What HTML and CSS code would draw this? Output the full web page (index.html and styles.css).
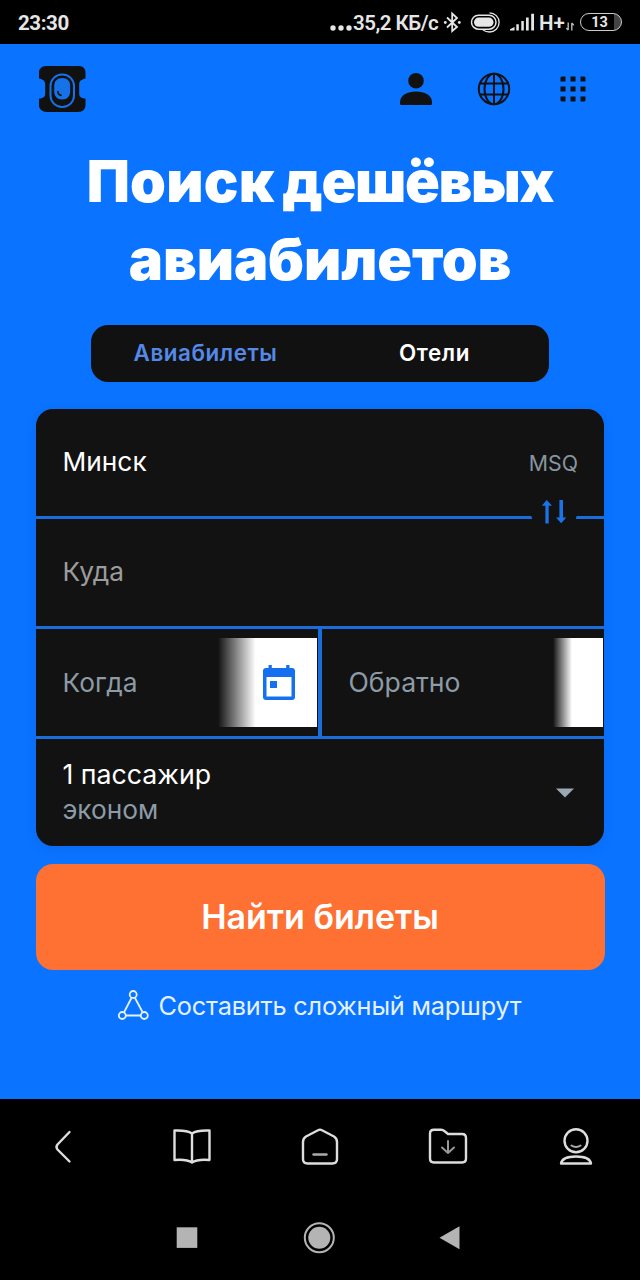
FILE: index.html
```html
<!DOCTYPE html>
<html lang="ru">
<head>
<meta charset="utf-8">
<title>Поиск дешёвых авиабилетов</title>
<link rel="stylesheet" href="styles.css">
</head>
<body>
<div class="screen">
  <div class="status">
    <span class="clock">23:30</span>
    <div class="status-right">
      <svg class="dots" width="24" height="44" viewBox="0 0 24 44" fill="#e6e6e6"><circle cx="4" cy="28" r="2.700"/><circle cx="12" cy="28" r="2.700"/><circle cx="20" cy="28" r="2.700"/></svg>
      <span class="speed">35,2 КБ/с</span>
      <svg class="status-icons" width="96" height="44" viewBox="440 0 96 44" fill="none" stroke="#e6e6e6">
        <path d="M447 17.500L457 27L452.200 31V13.500L457 18L447 27.500" stroke-width="1.800"/>
        <circle cx="445.300" cy="22.500" r="1.400" fill="#e6e6e6" stroke="none"/><circle cx="459.300" cy="22.500" r="1.400" fill="#e6e6e6" stroke="none"/>
        <rect x="471.500" y="15.200" width="24.500" height="14" rx="7" stroke-width="1.500"/>
        <rect x="474" y="17.600" width="19.500" height="9.200" rx="4.600" fill="#e6e6e6" stroke="none"/>
        <path d="M489.500 12.800A9.600 9.600 0 0 1 489.500 32C486.500 32 484.500 31 483 30" stroke-width="1.300"/>
        <path d="M510 30.500V29.300L514.500 27V30.500ZM516.300 30.500V24.300H518.800V30.500ZM521.300 30.500V21H523.800V30.500ZM526 30.500V17.500H528.700V30.500ZM531.200 30.500V13.700H534V30.500Z" fill="#e6e6e6" stroke="none"/>
      </svg>
      <span class="net">H+</span>
      <svg width="8" height="44" viewBox="0 0 8 44" fill="none" stroke="#b8b8b8" stroke-width="1.400"><path d="M2.200 22.500V30M.3 28L2.200 30M5.800 30.500V23M5.800 23L7.700 25.200"/></svg>
      <div class="battery"><span>13</span></div>
    </div>
  </div>

  <main class="page">
    <header class="header">
      <svg class="logo" width="48" height="48" viewBox="38 65 48 48">
        <path d="M46 66H79C83 66 85.500 69 85.500 72V78.500C82 79 79.200 81 79.200 84V94C79.200 97 82 98.500 85.500 98.500V105C85.500 109 83 112 78 112H47C42 112 39 109 39 105V98.500C42.500 98.500 45.200 97 45.200 94V84C45.200 81 42.500 79 39 78.500V72C39 69 42 66 46 66Z" fill="#111"/>
        <rect x="50.500" y="74.500" width="23.500" height="32.500" rx="11.500" fill="none" stroke="#1672e8" stroke-width="2"/>
        <path d="M62.200 78C67.200 78 70.200 81 70.200 86V91C70.200 96.500 67.200 99.500 62.200 99.500S54.200 96.500 54.200 91V86C54.200 81 57.200 78 62.200 78Z" fill="#1672e8"/>
        <path d="M57.800 91C57.800 94 59 95.300 61.700 95.300" fill="none" stroke="#111" stroke-width="1.700"/>
      </svg>
      <div class="actions">
        <svg width="34" height="34" viewBox="399 72 34 34" fill="#111"><circle cx="416" cy="80.700" r="7.800"/><path d="M400 102V103.500Q400 105 401.500 105H430.500Q432 105 432 103.500V102C432 95.500 424.500 91.500 416 91.500S400 95.500 400 102Z"/></svg>
        <svg width="34" height="34" viewBox="477 72 34 34" fill="none" stroke="#111" stroke-width="2"><circle cx="494" cy="89" r="15.200"/><ellipse cx="494" cy="89" rx="9.500" ry="15.200"/><path d="M494 74V104M480 83.500H508M480 94.500H508"/></svg>
        <svg width="26" height="26" viewBox="0 0 26 26" fill="#111"><path d="M1.500 .5h4v5h-5v-4zM10.500 .5h5v5h-5zM20.500 .5h4l1 1v4h-5zM.5 10.500h5v5h-5zM10.500 10.500h5v5h-5zM20.500 10.500h5v5h-5zM.5 20.500h5v5h-4l-1-1zM10.500 20.500h5v5h-5zM20.500 20.500h5v4l-1 1h-4z"/></svg>
      </div>
    </header>

    <h1 class="title"><span class="t1">Поиск</span> <span class="t3">дешёвых</span><br><span class="t2">авиабилетов</span></h1>

    <nav class="tabs"><a class="tab active">Авиабилеты</a><a class="tab">Отели</a></nav>

    <section class="form">
      <div class="field origin">
        <span>Минск</span><span class="code">MSQ</span>
        <div class="swap"><svg width="26" height="26" viewBox="0 0 26 26" fill="#1b73e8"><path d="M5.700 1L11 6.800H7.700V24.500H4.400V6.800H.8ZM18.400 1V18.500H15L20.200 24.300L25.300 18.500H22V1Z"/></svg></div>
      </div>
      <div class="field hint">Куда</div>
      <div class="dates">
        <div class="field muted">Когда
          <div class="fade depart"><svg width="34" height="38" viewBox="0 0 34 38"><path fill="#1570f0" fill-rule="evenodd" d="M6.500 1H9.800V4H24.200V1H27.500V4H30Q33 4 33 7V33Q33 36 30 36H4Q1 36 1 33V7Q1 4 4 4H6.500ZM4.500 13H29.500V32.500H4.500Z"/><path fill="#1570f0" d="M8 17H15V24H8Z"/></svg></div>
        </div>
        <div class="field muted back">Обратно<div class="fade return"></div></div>
      </div>
      <div class="field passengers">
        <div><div class="pax">1 пассажир</div><div class="cabin">эконом</div></div>
        <svg width="18" height="10" viewBox="0 0 18 10"><path d="M0 .5H18L9 9.500Z" fill="#98a8b5"/></svg>
      </div>
    </section>

    <button class="submit"><span>Найти билеты</span></button>
    <a class="complex">
      <svg width="32" height="32" viewBox="117 989 32 32" fill="none" stroke="#e4f2ff" stroke-width="1.800"><circle cx="133.200" cy="993.500" r="3.500"/><circle cx="122.300" cy="1014.500" r="3.500"/><circle cx="144.300" cy="1014.500" r="3.500"/><path d="M131.500 997L124.200 1011M135 997L142.500 1011M126 1014.500H140.600"/></svg>
      <span>Составить сложный маршрут</span>
    </a>
  </main>

  <nav class="toolbar">
    <svg width="40" height="40" viewBox="43 1127 40 40"><path d="M69.500 1132L57.500 1144.500Q55.500 1147 57.500 1149.500L69.500 1161.500"/></svg>
    <svg width="40" height="40" viewBox="171 1127 40 40"><path d="M192 1133.500Q187 1130 174.500 1130.500V1160Q187 1159 192 1162.500Q197 1159 209.500 1160V1130.500Q197 1130 192 1133.500V1162"/></svg>
    <svg width="40" height="40" viewBox="300 1127 40 40"><path d="M318 1130.300Q320 1129 322 1130.300L334 1136.500Q337 1138.500 337 1142V1159Q337 1163.500 332.500 1163.500H307.500Q303 1163.500 303 1159V1142Q303 1138.500 306 1136.500Z"/><path d="M313.500 1154.500H326.500" stroke="#aaa"/></svg>
    <svg width="40" height="40" viewBox="428 1127 40 40"><path d="M434 1129.700H441Q443 1129.700 445 1131.500L448 1134H462Q466 1134 466 1138V1158.500Q466 1162.500 462 1162.500H434Q430 1162.500 430 1158.500V1133.500Q430 1129.700 434 1129.700Z"/><path d="M448 1141V1153M442 1147.500L448 1153L454 1147.500" stroke="#999" stroke-width="2"/></svg>
    <svg width="40" height="40" viewBox="556 1127 40 40"><circle cx="576" cy="1140.800" r="11.500"/><path d="M571.500 1145.500Q576 1148.500 580.500 1145.500" stroke="#aaa" stroke-width="2"/><path d="M561 1163.500C562 1158 568 1156.500 576 1156.500S590 1158 591 1163.500Z"/></svg>
  </nav>
  <nav class="system">
    <svg width="32" height="32" viewBox="0 0 32 32"><rect x="4.700" y="5.300" width="20.600" height="20.600"/></svg>
    <svg width="32" height="32" viewBox="0 0 32 32"><circle cx="16.300" cy="15.800" r="14.500" fill="none" stroke="#b4b4b4" stroke-width="2"/><circle cx="16.300" cy="15.800" r="11"/></svg>
    <svg width="32" height="32" viewBox="0 0 32 32"><path d="M5.500 15.800L25.500 4.300V27.300Z"/></svg>
  </nav>
</div>
</body>
</html>
```
FILE: styles.css
```css
* { box-sizing: border-box; }
body { margin: 0; background: #000; }
svg { display: block; flex: none; }
.screen { width: 640px; height: 1280px; display: flex; flex-direction: column; overflow: hidden; font-family: Inter, "Noto Sans", sans-serif; color: #fff; }

.status { height: 44px; flex: none; display: flex; justify-content: space-between; align-items: center; padding: 2px 18px 0; font: 700 20.5px/42px Roboto, sans-serif; color: #e6e6e6; white-space: nowrap; }
.status svg { margin-top: -2px; }
.clock { letter-spacing: -.4px; }
.status-right { display: flex; align-items: center; }
.speed { width: 87px; font-weight: 600; letter-spacing: -.5px; }
.net { width: 27px; margin-left: 3px; font-weight: 600; }
.battery { width: 42px; height: 18px; margin-left: 6px; margin-top: -3px; border: 1.6px solid #ccc; border-radius: 9px; display: flex; align-items: center; justify-content: center; font-size: 14.5px; line-height: 17px; background: linear-gradient(90deg, transparent 82%, #444 82%); }
.battery span { padding: 2px 3px 0 0; }

.page { height: 1055px; flex: none; background: #0a73ff; display: flex; flex-direction: column; align-items: center; }
.header { width: 100%; height: 98px; flex: none; display: flex; justify-content: space-between; align-items: flex-start; padding: 21px 54px 0 38px; }
.actions { display: flex; align-items: center; height: 48px; }
.actions svg:nth-child(2) { margin: 0 48px 0 44px; }
.actions svg:first-child { margin-left: -1px; }
.actions svg:nth-child(2) { margin-right: 49px; }
.title { margin: 0; height: 156px; font-size: 57.500px; line-height: 78px; font-weight: 900; text-align: center; white-space: nowrap; word-spacing: -3.500px; }
.t1 { letter-spacing: .2px; }
.t2 { letter-spacing: -.1px; }
.t3 { letter-spacing: -1.300px; }

.tabs { width: 458px; height: 57px; flex: none; margin-top: 27px; border-radius: 17px; background: #111; display: grid; grid-template-columns: 1fr 1fr; }
.tab { font-size: 22.400px; font-weight: 600; line-height: 56px; letter-spacing: .55px; text-align: center; }
.tab.active { color: #5589e8; }

.form { width: 568px; height: 437px; flex: none; margin-top: 27px; border-radius: 17px; overflow: hidden; background: #1b6cdc; display: grid; grid-template-rows: repeat(4, 1fr); gap: 3.400px; box-shadow: 0 2px 8px rgba(20, 90, 200, .35); }
.field { position: relative; background: #121212; padding: 0 26px 0 26.500px; display: flex; align-items: center; font-size: 26.300px; line-height: 36px; white-space: nowrap; }
.origin { justify-content: space-between; z-index: 1; }
.code { padding-top: 1px; font-size: 21.300px; color: #87959f; }
.swap { position: absolute; right: 27px; bottom: -19px; width: 46px; height: 46px; border-radius: 50%; background: #121212; display: flex; align-items: center; justify-content: center; }
.hint { color: #9c9c9c; }
.muted { color: #8c9ba6; }
.back { padding: 0 26px 2px 27px; font-size: 26.600px; }
.dates { display: grid; grid-template-columns: 282px 1fr; gap: 3.500px; }
.fade { position: absolute; top: 9px; height: 89px; }
.depart { right: 1px; width: 99px; padding: 26px 0 0 44px; background: linear-gradient(90deg, #121212, #fff 38%); }
.return { right: 1px; width: 50px; background: linear-gradient(90deg, #121212, #fff 38%); }
.passengers { justify-content: space-between; padding-right: 30px; padding-bottom: 1px; }
.passengers svg { margin-top: 1px; }
.pax { font-size: 26.700px; }
.cabin { color: #8c9ba6; }

.submit { width: 569px; height: 106px; flex: none; margin-top: 18px; border: 0; border-radius: 17px; background: #ff7033; color: #fff; font: 600 34px/1 Inter, "Noto Sans", sans-serif; }
.complex { display: flex; align-items: center; gap: 10px; height: 36px; margin-top: 18px; padding-right: 2px; font-size: 25.300px; letter-spacing: -.2px; line-height: 36px; white-space: nowrap; color: #e4f2ff; }

.toolbar { height: 96px; flex: none; display: flex; justify-content: space-between; padding: 28px 44px 0 43px; }
.toolbar svg { fill: none; stroke: #ddd; stroke-width: 2.400; stroke-linecap: round; stroke-linejoin: round; }
.system { display: flex; justify-content: center; gap: 99px; padding: 27px 2px 0 0; }
.system svg { fill: #b4b4b4; }
```
